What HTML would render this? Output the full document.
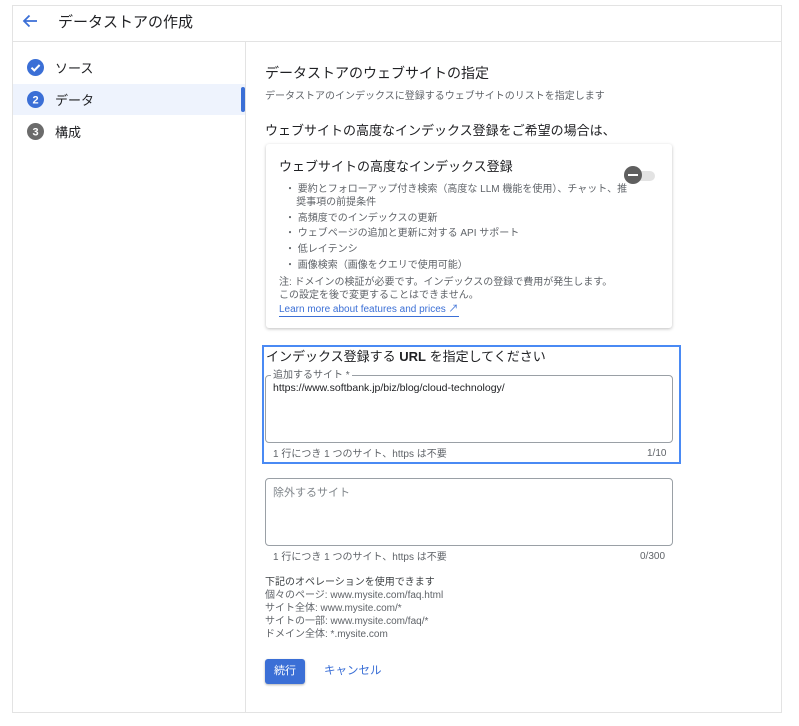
<!DOCTYPE html>
<html><head><meta charset="utf-8"><style>
*{box-sizing:border-box;margin:0;padding:0}
body{width:799px;height:726px;background:#fff;font-family:"Liberation Sans","Noto Sans CJK JP",sans-serif;color:#202124;position:relative;overflow:hidden;line-height:1.2}
.a{position:absolute;white-space:nowrap}
.frame{position:absolute;left:12px;top:5px;width:770px;height:708px;border:1px solid #e3e3e3}
.g{color:#5f6368}
.s{font-size:10px;line-height:13px}
.c{display:flex;align-items:center;justify-content:center}
</style></head><body>
<div class="frame"></div>
<div class="a" style="left:13px;top:41px;width:768px;height:1px;background:#e3e3e3"></div>
<div class="a" style="left:245px;top:42px;width:1px;height:670px;background:#e3e3e3"></div>
<svg class="a" style="left:22px;top:14px" width="16" height="14" viewBox="0 0 16 14"><path d="M15 7H2M7.5 1.5L2 7l5.5 5.5" stroke="#3b6fd6" stroke-width="1.8" fill="none"/></svg>
<div class="a" style="left:58px;top:14px;font-size:15px">データストアの作成</div>

<svg class="a" style="left:27px;top:59px" width="17" height="17"><circle cx="8.5" cy="8.5" r="8.5" fill="#3b6fd6"/><path d="M4.5 8.7l2.8 2.8 5.3-5.5" stroke="#fff" stroke-width="2" fill="none"/></svg>
<div class="a" style="left:55px;top:61px;font-size:13px">ソース</div>
<div class="a" style="left:13px;top:84px;width:232px;height:31px;background:#eef3fd"></div>
<div class="a" style="left:241px;top:87px;width:4px;height:25px;background:#3b6fd6;border-radius:2px"></div>
<svg class="a" style="left:27px;top:91px" width="17" height="17"><circle cx="8.5" cy="8.5" r="8.5" fill="#3b6fd6"/><text x="8.5" y="12.5" text-anchor="middle" fill="#fff" font-size="11" font-weight="bold" font-family="Liberation Sans">2</text></svg>
<div class="a" style="left:55px;top:93px;font-size:13px">データ</div>
<svg class="a" style="left:27px;top:123px" width="17" height="17"><circle cx="8.5" cy="8.5" r="8.5" fill="#6b6b6b"/><text x="8.5" y="12.5" text-anchor="middle" fill="#fff" font-size="11" font-weight="bold" font-family="Liberation Sans">3</text></svg>
<div class="a" style="left:55px;top:125px;font-size:13px">構成</div>

<div class="a" style="left:265px;top:65px;font-size:14px">データストアのウェブサイトの指定</div>
<div class="a g s" style="left:265px;top:90px">データストアのインデックスに登録するウェブサイトのリストを指定します</div>
<div class="a" style="left:265px;top:123px;font-size:13px">ウェブサイトの高度なインデックス登録をご希望の場合は、</div>

<div class="a" style="left:266px;top:144px;width:406px;height:184px;border-radius:3px;box-shadow:0 1px 3px rgba(0,0,0,.25)"></div>
<div class="a" style="left:279px;top:159px;font-size:13px">ウェブサイトの高度なインデックス登録</div>
<div class="a" style="left:624px;top:171px;width:31px;height:10px;border-radius:5px;background:#e3e3e3"></div>
<div class="a" style="left:624px;top:166px;width:18px;height:18px;border-radius:50%;background:#5f5f5f"></div>
<div class="a" style="left:628px;top:174px;width:10px;height:2px;background:#fff"></div>
<div class="a g s" style="left:285px;top:183px">・ 要約とフォローアップ付き検索（高度な LLM 機能を使用）、チャット、推<br>&nbsp;&nbsp;&nbsp;&nbsp;奨事項の前提条件</div>
<div class="a g s" style="left:285px;top:212px">・ 高頻度でのインデックスの更新</div>
<div class="a g s" style="left:285px;top:227px">・ ウェブページの追加と更新に対する API サポート</div>
<div class="a g s" style="left:285px;top:243px">・ 低レイテンシ</div>
<div class="a g s" style="left:285px;top:259px">・ 画像検索（画像をクエリで使用可能）</div>
<div class="a g s" style="left:279px;top:276px">注: ドメインの検証が必要です。インデックスの登録で費用が発生します。<br>この設定を後で変更することはできません。</div>
<div class="a s" style="left:279px;top:303px;color:#3b6fd6;border-bottom:1px solid #3b6fd6">Learn more about features and prices ↗</div>

<div class="a" style="left:262px;top:345px;width:419px;height:119px;border:2px solid #4a8af4"></div>
<div class="a" style="left:266px;top:349px;font-size:13px">インデックス登録する <b>URL</b> を指定してください</div>
<div class="a" style="left:265px;top:375px;width:408px;height:68px;border:1px solid #9aa0a6;border-radius:4px"></div>
<div class="a g s" style="left:271px;top:369px;background:#fff;padding:0 2px">追加するサイト *</div>
<div class="a" style="left:273px;top:382px;font-size:10.5px;line-height:13px">https://www.softbank.jp/biz/blog/cloud-technology/</div>
<div class="a g s" style="left:273px;top:448px">1 行につき 1 つのサイト、https は不要</div>
<div class="a g s" style="left:647px;top:447px">1/10</div>

<div class="a" style="left:265px;top:478px;width:408px;height:68px;border:1px solid #9aa0a6;border-radius:4px"></div>
<div class="a g" style="left:273px;top:487px;font-size:11px;color:#80868b">除外するサイト</div>
<div class="a g s" style="left:273px;top:551px">1 行につき 1 つのサイト、https は不要</div>
<div class="a g s" style="left:640px;top:550px">0/300</div>

<div class="a g s" style="left:265px;top:576px"><span style="color:#3c4043">下記のオペレーションを使用できます</span><br>個々のページ: www.mysite.com/faq.html<br>サイト全体: www.mysite.com/*<br>サイトの一部: www.mysite.com/faq/*<br>ドメイン全体: *.mysite.com</div>

<div class="a c" style="left:265px;top:659px;width:40px;height:25px;background:#3b6fd6;border-radius:3px;color:#fff;font-size:11px;box-shadow:0 1px 2px rgba(0,0,0,.3)">続行</div>
<div class="a" style="left:324px;top:665px;font-size:11.5px;color:#3b6fd6">キャンセル</div>
</body></html>
